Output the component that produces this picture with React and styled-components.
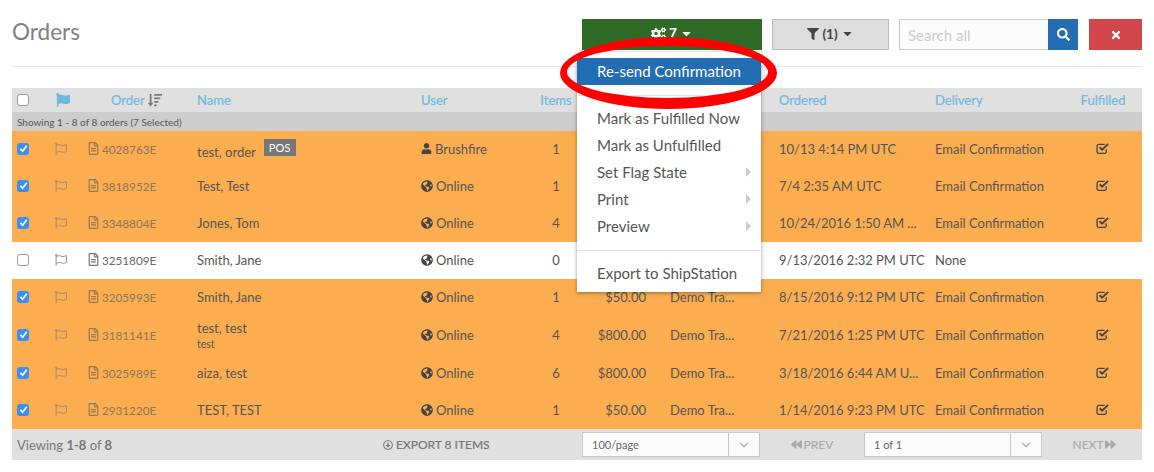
import React from 'react';
import styled, { createGlobalStyle } from 'styled-components';
import {
  FaCogs, FaFilter, FaSearch, FaTimes, FaFlag, FaRegFlag, FaRegFileAlt, FaUser,
  FaGlobeAmericas, FaSortAmountDown, FaBackward, FaForward,
  FaRegArrowAltCircleDown, FaCaretDown,
} from 'react-icons/fa';
import { LuChevronDown } from 'react-icons/lu';

const Global = createGlobalStyle`
  html, body { margin: 0; padding: 0; background: #fff; }
  body { font-family: Lato, "Liberation Sans", sans-serif; color: #555; }
  * { box-sizing: border-box; }
`;

const COLUMNS = '33px 31px 109px 224px 121px 52px 76px 109px 156px 141px 78px';

const Page = styled.div`
  position: relative;
  width: 1154px;
  height: 472px;
  padding: 0 12px;
  overflow: hidden;
`;
const TopBar = styled.header`
  display: flex;
  align-items: flex-start;
  height: 67px;
  padding-top: 19px;
  border-bottom: 1px solid #e6e6e6;
  margin-bottom: 21px;
`;
const Title = styled.h1`
  margin: 0 auto 0 0;
  font-size: 22.5px;
  line-height: 25px;
  font-weight: 400;
  color: #808080;
`;
const ActionButton = styled.button`
  display: flex;
  align-items: center;
  justify-content: center;
  gap: 3px;
  width: ${p => p.$w}px;
  height: 31px;
  margin-left: ${p => p.$gap}px;
  padding: 0 0 ${p => p.$lift || 0}px;
  font: 700 13.5px Lato, sans-serif;
  color: ${p => p.$fg};
  background: ${p => p.$bg};
  border: 1px solid ${p => p.$line};
`;
const SearchInput = styled.div`
  display: flex;
  align-items: center;
  width: 149px;
  height: 31px;
  margin-left: 10px;
  padding: 1px 0 0 8px;
  font-size: 15px;
  color: #ccc;
  background: #fcfcfc;
  border: 1px solid #ccc;
  border-right: 0;
`;
const SearchButton = styled.button`
  display: flex;
  align-items: center;
  justify-content: center;
  width: 30px;
  height: 31px;
  padding: 0;
  color: #fff;
  background: #246db2;
  border: 0;
`;
const Row = styled.div`
  display: grid;
  grid-template-columns: ${COLUMNS};
  align-items: center;
  height: ${p => p.$h}px;
  padding-bottom: ${p => p.$lift || 0}px;
  font-size: 13px;
  color: #555;
  background: ${p => p.$bg};
`;
const Cell = styled.div`
  display: flex;
  align-items: center;
  justify-content: ${p => p.$center ? 'center' : p.$right ? 'flex-end' : 'flex-start'};
  min-width: 0;
  padding-left: ${p => p.$center ? 0 : p.$pl ?? 12}px;
  padding-right: ${p => p.$right ? 12 : 0}px;
  white-space: nowrap;
`;
const HeadCell = styled(Cell)`
  font-weight: 400;
  color: #6cb9de;
  -webkit-text-stroke: .2px #6cb9de;
  gap: 3px;
`;
const SubHead = styled.div`
  display: flex;
  align-items: center;
  height: 19px;
  padding-left: 5px;
  font-size: 10px;
  color: #555;
  background: #cdcdcd;
`;
const Box = styled.span`
  display: flex;
  align-items: center;
  justify-content: center;
  width: 12px;
  height: 12px;
  border-radius: 3px;
  background: ${p => p.$on ? '#3a8ff7' : '#fff'};
  border: ${p => p.$on ? '0' : '1px solid #9a9a9a'};
`;
const OrderNo = styled.span`
  display: flex;
  align-items: center;
  gap: 2px;
  color: ${p => p.$on ? '#8a7658' : '#666'};
  font-size: 11.7px;
`;
const FlagIcon = styled(FaRegFlag)`
  color: ${p => p.$on ? '#b08f63' : '#a0a0a0'};
  font-size: 12px;
`;
const FileIcon = styled(FaRegFileAlt)`
  color: ${p => p.$on ? '#927b59' : '#777'};
  font-size: 13px;
`;
const UserTag = styled.span`
  display: flex;
  align-items: center;
  gap: 3px;
  color: #555;
`;
const Names = styled.div`
  padding-top: ${p => p.$pt}px;
  line-height: 15px;
`;
const SmallName = styled.div`
  font-size: 10.5px;
  line-height: 17px;
`;
const Badge = styled.span`
  display: inline-block;
  margin-left: 8px;
  padding: 0 5px;
  font-size: 11px;
  line-height: 17px;
  letter-spacing: .2px;
  color: #fff;
  background: #777;
  vertical-align: 5px;
`;
const Footer = styled.footer`
  display: grid;
  grid-template-columns: 371px 199px 178px 104px 178px 100px;
  align-items: center;
  height: 31px;
  font-size: 12px;
  background: #e0e0e0;
`;
const Viewing = styled.div`
  padding-left: 5px;
  font-size: 13px;
  color: #777;
  b { font-weight: 700; }
`;
const Export = styled.div`
  display: flex;
  align-items: center;
  gap: 3px;
  font-weight: 400;
  -webkit-text-stroke: .2px #777;
  color: #777;
  font-size: 12px;
`;
const PageSelect = styled.div`
  display: flex;
  align-items: stretch;
  height: 25px;
  background: #fbfbfb;
  border: 1px solid #c8c8c8;
  font-size: 11px;
  color: #666;
`;
const SelectText = styled.div`
  flex: 1;
  display: flex;
  align-items: center;
  padding-left: 9px;
`;
const SelectArrow = styled.div`
  display: flex;
  align-items: center;
  justify-content: center;
  width: 31px;
  color: #aaa;
  border-left: 1px solid #c8c8c8;
`;
const Pager = styled.div`
  display: flex;
  align-items: center;
  justify-content: center;
  gap: 2px;
  padding-left: ${p => p.$pl || 0}px;
  font-size: 12px;
  color: #aaa;
  -webkit-text-stroke: .2px #aaa;
`;
const Menu = styled.div`
  position: absolute;
  left: 577px;
  top: 52px;
  width: 184px;
  height: 240px;
  padding: 6px 0 5px;
  background: #fff;
  box-shadow: 0 1px 4px rgba(0,0,0,.4);
`;
const MenuItem = styled.div`
  display: flex;
  align-items: center;
  justify-content: space-between;
  height: 27px;
  padding: 0 10px 2px 20px;
  font-size: 15px;
  color: ${p => p.$active ? '#fff' : '#555'};
  background: ${p => p.$active ? '#246db2' : 'transparent'};
`;
const Caret = styled.span`
  width: 0;
  height: 0;
  border-left: 5px solid #ccc;
  border-top: 5px solid transparent;
  border-bottom: 5px solid transparent;
`;
const MenuLine = styled.div`
  height: 1px;
  margin: ${p => p.$m};
  background: #e5e5e5;
`;
const Ring = styled.svg`
  position: absolute;
  left: 550px;
  top: 30px;
  pointer-events: none;
`;

const Check = () => (
  <svg width="9" height="9" viewBox="0 0 10 10"><path d="M1.5 5.4 4 8 8.6 2" fill="none" stroke="#fff" strokeWidth="1.9" /></svg>
);
const CheckSquare = () => (
  <svg width="14" height="13" viewBox="0 0 13 12">
    <path d="M9.5 6.6V9a1.6 1.6 0 0 1-1.6 1.6H2.6A1.6 1.6 0 0 1 1 9V3.8a1.6 1.6 0 0 1 1.6-1.6H8" fill="none" stroke="#444" strokeWidth="1.2" />
    <path d="M3.4 4.8 5.7 7.1 11.3 1.7" fill="none" stroke="#444" strokeWidth="1.9" />
  </svg>
);
const Globe = () => <FaGlobeAmericas size={12} color="#444" />;

const rows = [
  { on: 1, id: '4028763E', name: 'test, order', pos: 1, user: 'Brushfire', items: 1, date: '10/13 4:14 PM UTC', del: 'Email Confirmation' },
  { on: 1, id: '3818952E', name: 'Test, Test', items: 1, date: '7/4 2:35 AM UTC', del: 'Email Confirmation' },
  { on: 1, id: '3348804E', name: 'Jones, Tom', items: 4, date: '10/24/2016 1:50 AM ...', del: 'Email Confirmation' },
  { on: 0, id: '3251809E', name: 'Smith, Jane', items: 0, date: '9/13/2016 2:32 PM UTC', del: 'None' },
  { on: 1, id: '3205993E', name: 'Smith, Jane', items: 1, total: '$50.00', via: 'Demo Tra...', date: '8/15/2016 9:12 PM UTC', del: 'Email Confirmation' },
  { on: 1, id: '3181141E', name: 'test, test', sub: 'test', items: 4, total: '$800.00', via: 'Demo Tra...', date: '7/21/2016 1:25 PM UTC', del: 'Email Confirmation', h: 38 },
  { on: 1, id: '3025989E', name: 'aiza, test', items: 6, total: '$800.00', via: 'Demo Tra...', date: '3/18/2016 6:44 AM U...', del: 'Email Confirmation', h: 38 },
  { on: 1, id: '2931220E', name: 'TEST, TEST', items: 1, total: '$50.00', via: 'Demo Tra...', date: '1/14/2016 9:23 PM UTC', del: 'Email Confirmation' },
];

export default function App() {
  return (
    <Page>
      <Global />
      <TopBar>
        <Title>Orders</Title>
        <ActionButton $w={180} $gap={0} $lift={3} $bg="#2f6b26" $line="#2f6b26" $fg="#fff"><FaCogs size={15} />7<FaCaretDown size={13} /></ActionButton>
        <ActionButton $w={117} $gap={10} $lift={2} $bg="#ddd" $line="#bbb" $fg="#444"><FaFilter size={12} />(1)<FaCaretDown size={13} /></ActionButton>
        <SearchInput>Search all</SearchInput>
        <SearchButton><FaSearch size={13} /></SearchButton>
        <ActionButton $w={53} $gap={11} $bg="#d2464c" $line="#c9474c" $fg="#fff"><FaTimes size={12} /></ActionButton>
      </TopBar>

      <Row $h={24} $bg="#e0e0e0">
        <Cell $pl={5}><Box /></Cell>
        <Cell $pl={11}><FaFlag size={14} color="#6cb9de" /></Cell>
        <HeadCell $pl={35}>Order <FaSortAmountDown size={14} color="#777" /></HeadCell>
        <HeadCell>Name</HeadCell>
        <HeadCell>User</HeadCell>
        <HeadCell $center>Items</HeadCell>
        <HeadCell $right />
        <HeadCell />
        <HeadCell>Ordered</HeadCell>
        <HeadCell>Delivery</HeadCell>
        <HeadCell $center>Fulfilled</HeadCell>
      </Row>
      <SubHead>Showing 1 - 8 of 8 orders (7 Selected)</SubHead>
      {rows.map(r => (
        <Row key={r.id} $lift={r.h ? 1 : 2} $h={r.h || 37} $bg={r.on ? '#fcad4f' : '#fff'}>
          <Cell $pl={5}><Box $on={r.on}>{r.on ? <Check /> : null}</Box></Cell>
          <Cell $pl={10}><FlagIcon $on={r.on} /></Cell>
          <Cell $pl={11}><OrderNo $on={r.on}><FileIcon $on={r.on} />{r.id}</OrderNo></Cell>
          <Cell>
            <Names $pt={r.sub ? 5 : 2}>
              {r.name}{r.pos ? <Badge>POS</Badge> : null}
              {r.sub ? <SmallName>{r.sub}</SmallName> : null}
            </Names>
          </Cell>
          <Cell>
            <UserTag>{r.user ? <FaUser size={11} color="#444" /> : <Globe />}{r.user || 'Online'}</UserTag>
          </Cell>
          <Cell $center>{r.items}</Cell>
          <Cell $right>{r.total}</Cell>
          <Cell>{r.via}</Cell>
          <Cell>{r.date}</Cell>
          <Cell>{r.del}</Cell>
          <Cell $center>{r.on ? <CheckSquare /> : null}</Cell>
        </Row>
      ))}
      <Footer>
        <Viewing>Viewing <b>1-8</b> of <b>8</b></Viewing>
        <Export><FaRegArrowAltCircleDown size={10} />EXPORT 8 ITEMS</Export>
        <PageSelect><SelectText>100/page</SelectText><SelectArrow><LuChevronDown size={14} /></SelectArrow></PageSelect>
        <Pager><FaBackward size={11} />PREV</Pager>
        <PageSelect><SelectText>1 of 1</SelectText><SelectArrow><LuChevronDown size={14} /></SelectArrow></PageSelect>
        <Pager $pl={5}>NEXT<FaForward size={11} /></Pager>
      </Footer>

      <Menu>
        <MenuItem $active>Re-send Confirmation</MenuItem>
        <MenuLine $m="10px 0 9px" />
        <MenuItem>Mark as Fulfilled Now</MenuItem>
        <MenuItem>Mark as Unfulfilled</MenuItem>
        <MenuItem>Set Flag State<Caret /></MenuItem>
        <MenuItem>Print<Caret /></MenuItem>
        <MenuItem>Preview<Caret /></MenuItem>
        <MenuLine $m="10px 0 9px" />
        <MenuItem>Export to ShipStation</MenuItem>
      </Menu>
      <Ring width="240" height="90" viewBox="0 0 240 90">
        <path
          fillRule="evenodd"
          fill="#f00"
          d="M10 43a108.500 36 0 1 0 217 0a108.500 36 0 1 0-217 0ZM17 42a100.500 26 0 1 0 201 0a100.500 26 0 1 0-201 0Z"
        />
      </Ring>
    </Page>
  );
}
